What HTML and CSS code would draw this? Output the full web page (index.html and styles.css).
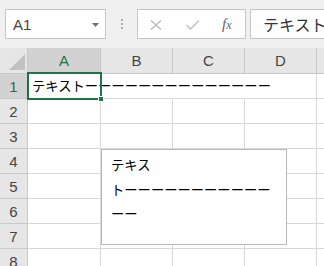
FILE: index.html
```html
<!DOCTYPE html>
<html lang="ja">
<head>
<meta charset="utf-8">
<link rel="stylesheet" href="styles.css">
</head>
<body>
<div class="app">
  <div class="toolbar">
    <div class="namebox">
      <span class="nb-text">A1</span>
      <svg class="nb-arrow" width="7" height="4" viewBox="0 0 7 4"><path d="M0 0H7L3.5 4Z" fill="#707070"/></svg>
    </div>
    <div class="grip"><i></i><i></i><i></i></div>
    <div class="fbtns">
      <svg class="ic-x" width="12" height="10" viewBox="0 0 12 10"><path d="M1 0.5L11 9.5M11 0.5L1 9.5" stroke="#b8b8b8" stroke-width="1.3" fill="none"/></svg>
      <svg class="ic-check" width="14" height="10" viewBox="0 0 14 10"><path d="M0.5 5L4.5 9L13 0.5" stroke="#c4c4c4" stroke-width="1.6" fill="none"/></svg>
      <span class="fx"><span class="fx-f">f</span><span class="fx-x">x</span></span>
    </div>
    <div class="finput">テキスト</div>
  </div>
  <div class="sheet">
    <div class="grid">
      <div class="hd corner"><svg width="28" height="26" viewBox="0 0 28 26"><path d="M25 6V22H9Z" fill="#c1c1c1"/></svg></div>
      <div class="hd col active">A</div>
      <div class="hd col">B</div>
      <div class="hd col">C</div>
      <div class="hd col">D</div>
      <div class="hd col"></div>

      <div class="hd row active">1</div>
      <div class="c a1"><span class="ctext">テキストーーーーーーーーーーーーーー</span></div>
      <div class="c nob"></div>
      <div class="c nob"></div>
      <div class="c"></div>
      <div class="c"></div>

      <div class="hd row">2</div><div class="c"></div><div class="c"></div><div class="c"></div><div class="c"></div><div class="c"></div>
      <div class="hd row">3</div><div class="c"></div><div class="c"></div><div class="c"></div><div class="c"></div><div class="c"></div>
      <div class="hd row">4</div><div class="c"></div><div class="c"></div><div class="c"></div><div class="c"></div><div class="c"></div>
      <div class="hd row">5</div><div class="c"></div><div class="c"></div><div class="c"></div><div class="c"></div><div class="c"></div>
      <div class="hd row">6</div><div class="c"></div><div class="c"></div><div class="c"></div><div class="c"></div><div class="c"></div>
      <div class="hd row">7</div><div class="c"></div><div class="c"></div><div class="c"></div><div class="c"></div><div class="c"></div>
      <div class="hd row">8</div><div class="c"></div><div class="c"></div><div class="c"></div><div class="c"></div><div class="c"></div>
    </div>
    <div class="sel"><i class="handle"></i></div>
    <div class="textbox">
      <div class="tl">テキス</div>
      <div class="tl">トーーーーーーーーーーー</div>
      <div class="tl">ーー</div>
    </div>
  </div>
</div>
</body>
</html>
```

FILE: styles.css
```css
* { box-sizing: border-box; }
html, body { margin: 0; padding: 0; }
body {
  width: 324px;
  height: 266px;
  overflow: hidden;
  background: #ffffff;
  font-family: "Noto Sans CJK JP", "Noto Sans", sans-serif;
}
.app { width: 324px; height: 266px; overflow: hidden; }

.toolbar {
  height: 48px;
  background: #f0f0f0;
  display: flex;
  align-items: flex-start;
  padding-top: 9px;
  padding-left: 5px;
  overflow: hidden;
}
.namebox {
  width: 101px;
  height: 30px;
  background: #fff;
  border: 1px solid #c6c6c6;
  display: flex;
  align-items: center;
  padding-left: 7px;
  padding-right: 6px;
  justify-content: space-between;
  flex: none;
}
.nb-text {
  font-family: "Liberation Sans", "Noto Sans", sans-serif;
  font-size: 15px;
  color: #444;
}
.nb-arrow { margin-top: 1px; }
.grip {
  width: 31px;
  height: 30px;
  display: flex;
  flex-direction: column;
  align-items: center;
  padding-top: 10px;
  gap: 2px;
  flex: none;
}
.grip i {
  display: block;
  width: 2px;
  height: 2px;
  background: #a8a8a8;
}
.fbtns {
  width: 109px;
  height: 30px;
  background: #fff;
  border: 1px solid #c6c6c6;
  flex: none;
  display: flex;
  align-items: center;
  padding-left: 12px;
}
.ic-x { margin-top: 1px; }
.ic-check { margin-left: 24px; margin-top: 2px; }
.fx {
  margin-left: 22px;
  font-family: "Liberation Serif", "DejaVu Serif", serif;
  font-style: italic;
  color: #666;
  font-size: 15px;
  line-height: 1;
}
.fx-x { font-size: 12px; }
.finput {
  flex: none;
  width: 90px;
  height: 30px;
  margin-left: 4px;
  background: #fff;
  border: 1px solid #c6c6c6;
  border-right: none;
  padding-left: 12px;
  font-size: 16px;
  line-height: 28px;
  color: #333;
  white-space: nowrap;
}

.sheet { position: relative; }
.grid {
  display: grid;
  grid-template-columns: 28px 73px 72px 72px 72px 40px;
  grid-template-rows: 26px repeat(8, 25px);
}
.hd {
  background: #e6e6e6;
  color: #444;
  font-family: "Liberation Sans", "Noto Sans", sans-serif;
  font-size: 15px;
  display: flex;
  align-items: center;
  justify-content: center;
  border-right: 1px solid #c8c8c8;
  border-bottom: 1px solid #c8c8c8;
}
.hd.corner { padding: 0; display: block; }
.hd.corner svg { display: block; }
.hd.active { background: #d2d2d2; color: #217346; }
.hd.col.active { border-bottom: 2px solid #217346; }
.c {
  border-right: 1px solid #d8d8d8;
  border-bottom: 1px solid #d8d8d8;
  background: #fff;
}
.c.nob { border-right-color: #fff; }
.a1 { position: relative; z-index: 1; border-right-color: #fff; }
.ctext {
  display: block;
  padding-left: 4px;
  white-space: nowrap;
  font-size: 13.3px;
  line-height: 24px;
  color: #000;
}

.sel {
  position: absolute;
  left: 27px;
  top: 24px;
  width: 75px;
  height: 28px;
  border: 2px solid #217346;
  z-index: 2;
}
.handle {
  position: absolute;
  right: -4px;
  bottom: -4px;
  width: 6px;
  height: 6px;
  background: #217346;
  border: 1px solid #fff;
}

.textbox {
  position: absolute;
  left: 101px;
  top: 101px;
  width: 186px;
  height: 96px;
  background: #fff;
  border: 1px solid #b8b8b8;
  padding: 3px 0 0 9px;
  z-index: 3;
}
.tl {
  font-size: 13.3px;
  line-height: 24.5px;
  color: #000;
  white-space: nowrap;
}
```
